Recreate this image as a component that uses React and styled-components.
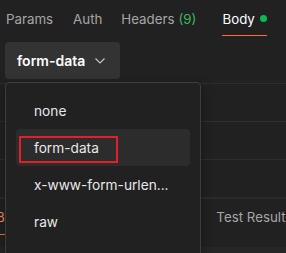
import React from "react";
import styled, { createGlobalStyle } from "styled-components";

const GlobalStyle = createGlobalStyle`
  html, body {
    margin: 0;
    padding: 0;
    background: #212121;
  }
  body {
    font-family: Inter, "Noto Sans", sans-serif;
    -webkit-font-smoothing: antialiased;
  }
`;

const Page = styled.div`
  position: relative;
  width: 286px;
  height: 253px;
  overflow: hidden;
  background: #212121;
`;

const TabBar = styled.div`
  display: flex;
  height: 36px;
  padding-left: 6px;
`;

const Tab = styled.div`
  display: flex;
  align-items: center;
  gap: 5px;
  padding-top: 2px;
  margin-right: ${(p) => p.$gap || 20}px;
  font-size: 13.3px;
  color: ${(p) => (p.$active ? "#ffffff" : "#a6a6a6")};
  box-sizing: border-box;
  border-bottom: 1px solid ${(p) => (p.$active ? "#ff6c37" : "transparent")};
  white-space: nowrap;
`;

const Count = styled.span`
  color: #3db55e;
  margin-left: 4px;
`;

const Dot = styled.span`
  width: 7px;
  height: 7px;
  border-radius: 50%;
  background: #0cbb52;
`;

const Toolbar = styled.div`
  display: flex;
  padding: 6px 5px 0;
`;

const SelectButton = styled.div`
  display: flex;
  align-items: center;
  justify-content: space-between;
  width: 115px;
  height: 37px;
  box-sizing: border-box;
  padding: 0 15px 0 12px;
  border-radius: 4px;
  background: #333333;
  color: #ffffff;
  font-size: 14px;
  font-weight: 600;
`;

const Table = styled.div`
  margin-top: 4px;
`;

const TableRow = styled.div`
  height: 37px;
  border-top: 1px solid #2e2e2e;
`;

const Response = styled.div`
  border-top: 2px solid #2b2b2b;
`;

const ResponseTabs = styled.div`
  display: flex;
  height: 36px;
  margin-left: -4px;
`;

const ResponseTab = styled.div`
  display: flex;
  align-items: center;
  padding-top: 1px;
  margin-right: ${(p) => p.$gap || 20}px;
  font-size: 13.3px;
  color: ${(p) => (p.$active ? "#ff8c5a" : "#a6a6a6")};
  box-sizing: border-box;
  border-bottom: 1px solid ${(p) => (p.$active ? "#ff6c37" : "transparent")};
  white-space: nowrap;
`;

const ResponseBody = styled.div`
  margin-top: 12px;
  height: 20px;
  background: #262626;
`;

const Menu = styled.div`
  position: absolute;
  left: 5px;
  top: 82px;
  width: 196px;
  height: 200px;
  box-sizing: border-box;
  padding: 9px 10px;
  border: 1px solid #3d3d3d;
  border-radius: 4px;
  background: #212121;
  box-shadow: 0 4px 12px rgba(0, 0, 0, 0.35);
`;

const MenuItem = styled.div`
  position: relative;
  display: flex;
  align-items: center;
  height: 37px;
  padding-left: 18px;
  border-radius: 4px;
  background: ${(p) => (p.$selected ? "#2c2c2c" : "transparent")};
  color: #e8e8e8;
  font-size: 13.7px;
  white-space: nowrap;
`;

const Highlight = styled.span`
  position: absolute;
  left: 3px;
  top: 7px;
  width: 99px;
  height: 27px;
  box-sizing: border-box;
  border: 2px solid #e3202a;
`;

const Chevron = () => (
  <svg width="10" height="6" viewBox="0 0 10 6" fill="none">
    <polyline points="0.5,0.5 5,5 9.5,0.5" stroke="#c4c4c4" strokeWidth="1.2" />
  </svg>
);

const items = ["none", "form-data", "x-www-form-urlen...", "raw", "binary"];

export default function App() {
  return (
    <Page>
      <GlobalStyle />
      <TabBar>
        <Tab>Params</Tab>
        <Tab $gap={19}>Auth</Tab>
        <Tab $gap={26}>
          <span>
            Headers<Count>(9)</Count>
          </span>
        </Tab>
        <Tab $active>
          Body
          <Dot />
        </Tab>
      </TabBar>
      <Toolbar>
        <SelectButton>
          form-data
          <Chevron />
        </SelectButton>
      </Toolbar>
      <Table>
        <TableRow />
        <TableRow />
        <TableRow />
      </Table>
      <Response>
        <ResponseTabs>
          <ResponseTab $active $gap={188}>Body</ResponseTab>
          <ResponseTab>Test Results</ResponseTab>
        </ResponseTabs>
        <ResponseBody />
      </Response>
      <Menu>
        {items.map((item) => (
          <MenuItem key={item} $selected={item === "form-data"}>
            {item}
            {item === "form-data" && <Highlight />}
          </MenuItem>
        ))}
      </Menu>
    </Page>
  );
}
